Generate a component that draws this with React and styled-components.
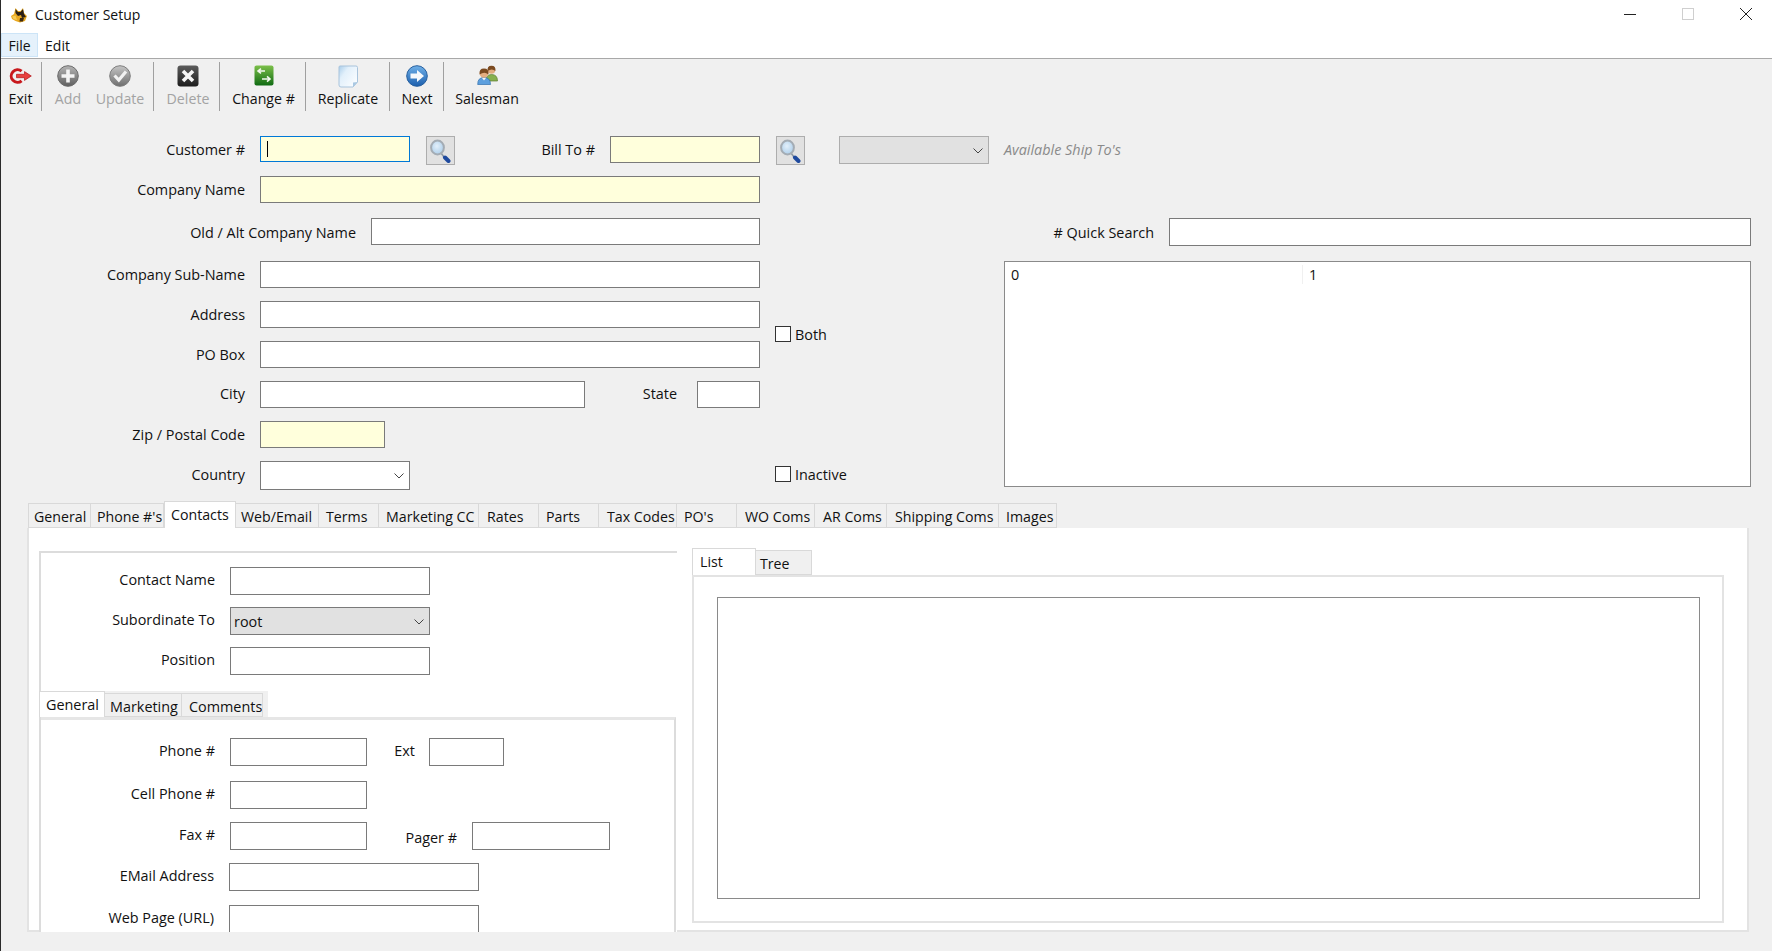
import React from "react";
import styled, { createGlobalStyle } from "styled-components";

const Global = createGlobalStyle`
  html, body { margin: 0; padding: 0; background: #f0f0f0; }
  body { font-family: "Open Sans", "Noto Sans", sans-serif; font-size: 14.4px; color: #111; }
  * { box-sizing: border-box; }
`;

const Window = styled.div`
  position: relative;
  width: 1772px;
  height: 951px;
  overflow: hidden;
  background: #f0f0f0;
  &::before {
    content: "";
    position: absolute;
    left: 0; top: 0; bottom: 0;
    width: 1px;
    background: #2a2a2a;
  }
`;

const TitleBar = styled.div`
  height: 33px;
  background: #fff;
  display: flex;
  align-items: center;
  padding-left: 10px;
  font-size: 14px;
`;
const TitleText = styled.span`
  margin-left: 7px;
  margin-top: -5px;
  flex: 1;
`;
const AppIconBox = styled.div`
  margin-top: -4px;
  display: flex;
`;
const WinControls = styled.div`
  display: flex;
  align-items: center;
  margin-top: -6px;
  padding-right: 20px;
  gap: 46px;
`;

const MenuBar = styled.div`
  height: 26px;
  background: #fff;
  display: flex;
  padding-left: 1px;
  border-bottom: 1px solid #a8a8a8;
  font-size: 14px;
`;
const MenuItem = styled.div`
  height: 24px;
  width: ${(p) => p.$w}px;
  display: flex;
  align-items: center;
  justify-content: center;
  background: ${(p) => (p.$active ? "#e5f1fb" : "transparent")};
  border: 1px solid ${(p) => (p.$active ? "#cce4f7" : "transparent")};
`;

const Toolbar = styled.div`
  height: 59px;
  display: flex;
  align-items: flex-start;
  padding-top: 3px;
  font-size: 14.2px;
`;
const Tool = styled.div`
  width: ${(p) => p.$w}px;
  margin-left: ${(p) => p.$ml || 0}px;
  margin-right: ${(p) => p.$mr || 0}px;
  height: 49px;
  display: flex;
  flex-direction: column;
  align-items: center;
  color: ${(p) => (p.$off ? "#a3a3a3" : "#111")};
`;
const ToolIcon = styled.div`
  height: 25px;
  padding-top: ${(p) => p.$pt ?? 3}px;
  display: flex;
  align-items: flex-start;
  justify-content: center;
`;
const ToolLabel = styled.div`
  margin-top: 2px;
  line-height: 19px;
  white-space: nowrap;
`;
const ToolSep = styled.div`
  width: 1px;
  height: 49px;
  background: #a0a0a0;
`;

const Form = styled.div`
  padding-top: 18px;
`;
const Row = styled.div`
  display: flex;
  align-items: flex-start;
  height: ${(p) => p.$h}px;
`;
const Label = styled.label`
  width: ${(p) => p.$w}px;
  margin-right: ${(p) => p.$gap ?? 15}px;
  height: ${(p) => p.$lh || 27}px;
  display: flex;
  align-items: center;
  justify-content: flex-end;
  white-space: nowrap;
`;
const Input = styled.input.attrs({ readOnly: true })`
  display: block;
  width: ${(p) => p.$w}px;
  height: ${(p) => p.$h || 27}px;
  margin-left: ${(p) => p.$ml || 0}px;
  padding: 0;
  outline: none;
  border: 1px solid ${(p) => (p.$focus ? "#0078d7" : "#7a7a7a")};
  background-color: ${(p) => (p.$req ? "#ffffdc" : "#fff")};
  ${(p) =>
    p.$focus
      ? `background-image: linear-gradient(#000,#000); background-repeat: no-repeat; background-size: 1px 16px; background-position: 6px center;`
      : ""}
`;
const SearchButton = styled.div`
  width: 29px;
  height: 29px;
  margin-left: ${(p) => p.$ml}px;
  background: #e1e1e1;
  border: 1px solid #adadad;
  display: flex;
  align-items: center;
  justify-content: center;
`;
const Select = styled.div`
  width: ${(p) => p.$w}px;
  height: ${(p) => p.$h || 28}px;
  margin-left: ${(p) => p.$ml || 0}px;
  border: 1px solid ${(p) => (p.$off ? "#adadad" : "#7a7a7a")};
  background: ${(p) => (p.$white ? "#fff" : "#e1e1e1")};
  display: flex;
  align-items: center;
  justify-content: space-between;
  padding: 1px 5px 0 3px;
`;
const Hint = styled.span`
  margin-left: 15px;
  height: 27px;
  display: flex;
  align-items: center;
  font-style: italic;
  color: #8a8a8a;
  white-space: nowrap;
`;

const Columns = styled.div`
  display: flex;
  height: 325px;
`;
const FieldsCol = styled.div`
  width: 760px;
  flex: none;
`;
const ChecksCol = styled.div`
  width: 244px;
  flex: none;
  padding: 150px 0 0 15px;
  display: flex;
  flex-direction: column;
  gap: 124px;
`;
const CheckRow = styled.div`
  display: flex;
  align-items: center;
  gap: 4px;
  height: 16px;
`;
const CheckBox = styled.span`
  width: 16px;
  height: 16px;
  background: #fff;
  border: 1px solid #333;
  flex: none;
`;
const SearchCol = styled.div`
  width: 747px;
  flex: none;
  padding-top: 42px;
`;
const QuickRow = styled.div`
  display: flex;
  height: 43px;
`;
const ResultList = styled.div`
  height: 226px;
  background: #fff;
  border: 1px solid #8a8a8a;
  display: flex;
  padding-top: 3px;
`;
const ResultCol = styled.div`
  height: 19px;
  width: ${(p) => p.$w}px;
  padding-left: 6px;
  border-right: 1px solid ${(p) => (p.$edge ? "#f0f0f0" : "transparent")};
`;

const TabStrip = styled.div`
  display: flex;
  align-items: flex-end;
  height: ${(p) => p.$h}px;
  margin-left: ${(p) => p.$ml || 0}px;
  font-size: 14.2px;
`;
const Tab = styled.div`
  width: ${(p) => p.$w}px;
  height: ${(p) => (p.$active ? p.$h + 2 : p.$h)}px;
  flex: none;
  background: ${(p) => (p.$active ? "#fff" : "#f0f0f0")};
  border: 1px solid #d9d9d9;
  border-left-width: ${(p) => (p.$first || p.$active ? 1 : 0)}px;
  border-bottom: ${(p) => (p.$active ? "none" : "1px solid #d9d9d9")};
  padding: 3px 0 0 ${(p) => p.$pl ?? 5}px;
  line-height: 19px;
  white-space: nowrap;
  overflow: hidden;
`;

const MainTabs = styled.div`
  margin-left: 27px;
  width: 1722px;
`;
const MainPanel = styled.div`
  height: 404px;
  overflow: hidden;
  display: flex;
  align-items: flex-start;
  border-left: 2px solid #e3e3e3;
  border-right: 2px solid #e3e3e3;
  background: linear-gradient(#e3e3e3, #e3e3e3) bottom / 100% 2px no-repeat, #fff;
`;
const ContactPanel = styled.div`
  flex: none;
  width: 638px;
  height: 460px;
  margin: 23px 0 0 10px;
  background: #fff;
  border-left: 2px solid #dcdcdc;
  border-top: 2px solid #dcdcdc;
  padding-top: 14px;
`;
const SubRow = styled.div`
  display: flex;
  align-items: flex-start;
  height: ${(p) => p.$h}px;
`;
const SubLabel = styled(Label)`
  height: ${(p) => p.$lh || 25}px;
`;
const InnerStrip = styled.div`
  display: flex;
  align-items: flex-end;
  height: 26px;
  width: 229px;
  margin-left: -2px;
  background: #f0f0f0;
`;
const InnerPanel = styled.div`
  width: 635px;
  height: 300px;
  border-top: 3px solid #e6e6e6;
  border-right: 2px solid #dcdcdc;
  padding-top: 18px;
`;
const RightArea = styled.div`
  flex: none;
  width: 1032px;
  margin: 20px 0 0 15px;
`;
const RightPanel = styled.div`
  height: 348px;
  border: 2px solid #e3e3e3;
  background: #fff;
  padding: 20px 22px 0 23px;
`;
const TreeBox = styled.div`
  height: 302px;
  border: 1px solid #8a8a8a;
  background: #fff;
`;

const Chevron = () => (
  <svg width="10" height="6" viewBox="0 0 10 6" fill="none" stroke="#444" strokeWidth="1">
    <path d="M0.5 0.5 L5 5 L9.5 0.5" />
  </svg>
);

const Magnifier = () => (
  <svg width="23" height="25" viewBox="0 0 23 25">
    <defs>
      <radialGradient id="lens" cx="0.45" cy="0.4" r="0.65">
        <stop offset="0" stopColor="#e3f0fb" />
        <stop offset="1" stopColor="#a9cbe8" />
      </radialGradient>
    </defs>
    <path d="M12 15 L15 19" stroke="#8b98a5" strokeWidth="1.6" />
    <path d="M16 19.5 L19.5 23" stroke="#1f4a9e" strokeWidth="4" strokeLinecap="round" />
    <ellipse cx="8.5" cy="9.5" rx="6.4" ry="7" fill="url(#lens)" stroke="#a4acb4" strokeWidth="2" />
  </svg>
);

const AppIcon = () => (
  <svg width="18" height="16" viewBox="0 0 18 16">
    <path d="M1 9 L4 7 L5.5 1 L8 4 L10.5 4 L13 1 L14 6 L17 9 L15 14 L10 15.5 L5.5 14 L2 12 Z" fill="#e9a81f" />
    <path d="M5.5 2 L8 5 L10.5 5 L13 2 L14 7 L16 10 L12 11 L11 8 L8 9 L5.5 6 Z" fill="#2a2018" />
    <path d="M2 9.5 L5.5 8.5 L7 13 L3.5 12 Z" fill="#f7cc55" />
    <path d="M10 11 L14 11 L13 14.5 L9.5 14.5 Z" fill="#3d2a12" />
  </svg>
);

const ExitIcon = () => (
  <svg width="23" height="16" viewBox="0 0 23 16">
    <path d="M12.6 3.2 A6.3 6.3 0 1 0 12.6 12.8" fill="none" stroke="#c8181c" strokeWidth="3" />
    <path d="M7.5 6.3 H15.5 V3.6 L22.3 8 L15.5 12.4 V9.7 H7.5 Z" fill="#e8403f" stroke="#b3161a" strokeWidth="0.7" />
  </svg>
);

const Disc = ({ id, from, to, ring, children }) => (
  <svg width="22" height="22" viewBox="0 0 22 22">
    <defs>
      <linearGradient id={id} x1="0" y1="0" x2="0" y2="1">
        <stop offset="0" stopColor={from} />
        <stop offset="1" stopColor={to} />
      </linearGradient>
    </defs>
    <circle cx="11" cy="11" r="10.3" fill={`url(#${id})`} stroke={ring} strokeWidth="1" />
    {children}
  </svg>
);

const AddIcon = () => (
  <Disc id="addg" from="#b5b5b5" to="#5f5f5f" ring="#6b6b6b">
    <path d="M11 4.5 V17.5 M4.5 11 H17.5" stroke="#f4f4f4" strokeWidth="3.6" />
  </Disc>
);
const UpdateIcon = () => (
  <Disc id="updg" from="#c6c6c6" to="#6e6e6e" ring="#7d7d7d">
    <path d="M5.5 10.5 L9.8 15 L17 6.5" fill="none" stroke="#f2f2f2" strokeWidth="3.2" />
  </Disc>
);
const NextIcon = () => (
  <Disc id="nxtg" from="#6fb0e8" to="#1c5fae" ring="#27609f">
    <path d="M4.5 8.6 H11 V5 L18 11 L11 17 V13.4 H4.5 Z" fill="#f6f9fc" />
  </Disc>
);
const DeleteIcon = () => (
  <svg width="22" height="22" viewBox="0 0 22 22">
    <defs>
      <linearGradient id="delg" x1="0" y1="0" x2="0" y2="1">
        <stop offset="0" stopColor="#5c5c5c" />
        <stop offset="1" stopColor="#1d1d1d" />
      </linearGradient>
    </defs>
    <rect x="0.5" y="0.5" width="21" height="21" rx="3" fill="url(#delg)" />
    <path d="M6 6 L16 16 M16 6 L6 16" stroke="#f6f6f6" strokeWidth="3.6" />
  </svg>
);
const ChangeIcon = () => (
  <svg width="20" height="21" viewBox="0 0 20 21">
    <defs>
      <linearGradient id="chg" x1="0" y1="0" x2="0" y2="1">
        <stop offset="0" stopColor="#7cc04a" />
        <stop offset="1" stopColor="#0f6a12" />
      </linearGradient>
    </defs>
    <rect x="0.5" y="0.5" width="19" height="20" rx="2" fill="url(#chg)" />
    <path d="M11 6 H4.5 M7 3.6 L4 6 L7 8.4" fill="none" stroke="#f2f7ee" strokeWidth="1.6" />
    <path d="M8 14 H15.5 M13 11.4 L16 14 L13 16.6" fill="none" stroke="#f2f7ee" strokeWidth="1.6" />
  </svg>
);
const ReplicateIcon = () => (
  <svg width="20" height="23" viewBox="0 0 20 23">
    <defs>
      <linearGradient id="repg" x1="0" y1="0" x2="1" y2="0.8">
        <stop offset="0" stopColor="#a9cdea" />
        <stop offset="0.35" stopColor="#e2f0fb" />
        <stop offset="1" stopColor="#fbfdff" />
      </linearGradient>
    </defs>
    <path d="M2 1 H18 Q19.5 1 19.5 2.5 V17 L15 22 H3 Q1 22 1 20 V2 Q1 1 2 1 Z" fill="url(#repg)" stroke="#a9c4dc" strokeWidth="1" />
    <path d="M19.5 17 L15 17.5 L15 22 Z" fill="#a9c8e2" />
  </svg>
);
const SalesmanIcon = () => (
  <svg width="21" height="20" viewBox="0 0 21 20">
    <path d="M9 16 Q9 9.5 14.5 9.5 Q20.5 9.5 20.5 16 Z" fill="#87b04e" stroke="#5c7d2e" strokeWidth="0.7" />
    <circle cx="14.5" cy="5" r="3.8" fill="#e3ad80" />
    <path d="M10.6 6 Q10 0.8 14.5 0.8 Q19 0.8 18.4 6 Q15 3 10.6 6 Z" fill="#7b4a20" />
    <path d="M0.7 19.5 Q0.5 12.5 7 12.5 Q13.5 12.5 13.5 19.5 Z" fill="#5c9fde" stroke="#3070ae" strokeWidth="0.7" />
    <path d="M5 13 L7 15.5 L9 13 Z" fill="#f4f4f4" />
    <circle cx="7" cy="8.5" r="4.3" fill="#e3ad80" />
    <path d="M2.6 9.5 Q1.8 3.6 7 3.6 Q12.2 3.6 11.4 9.5 Q7.5 6.2 2.6 9.5 Z" fill="#7b4a20" />
  </svg>
);

const topTabs = [
  ["General", 63, 5], ["Phone #'s", 73, 6], ["Contacts", 72, 6, true], ["Web/Email", 83, 5], ["Terms", 60, 7],
  ["Marketing CC", 100, 7], ["Rates", 60, 8], ["Parts", 60, 7], ["Tax Codes", 78, 8], ["PO's", 60, 7],
  ["WO Coms", 78, 8], ["AR Coms", 72, 8], ["Shipping Coms", 112, 8], ["Images", 58, 7],
];

export default function App() {
  return (
    <Window>
      <Global />
      <TitleBar>
        <AppIconBox><AppIcon /></AppIconBox>
        <TitleText>Customer Setup</TitleText>
        <WinControls>
          <svg width="12" height="12" viewBox="0 0 12 12"><path d="M0 6.5 H12" stroke="#222" strokeWidth="1" /></svg>
          <svg width="12" height="12" viewBox="0 0 12 12"><rect x="0.5" y="0.5" width="11" height="11" fill="none" stroke="#cfcfcf" /></svg>
          <svg width="12" height="12" viewBox="0 0 12 12"><path d="M0 0 L12 12 M12 0 L0 12" stroke="#222" strokeWidth="1" /></svg>
        </WinControls>
      </TitleBar>
      <MenuBar>
        <MenuItem $w={37} $active>File</MenuItem>
        <MenuItem $w={39}>Edit</MenuItem>
      </MenuBar>
      <Toolbar>
        <Tool $w={41}><ToolIcon $pt={6}><ExitIcon /></ToolIcon><ToolLabel>Exit</ToolLabel></Tool>
        <ToolSep />
        <Tool $w={52} $off><ToolIcon><AddIcon /></ToolIcon><ToolLabel>Add</ToolLabel></Tool>
        <Tool $w={52} $mr={7} $off><ToolIcon><UpdateIcon /></ToolIcon><ToolLabel>Update</ToolLabel></Tool>
        <ToolSep />
        <Tool $w={62} $ml={3} $off><ToolIcon><DeleteIcon /></ToolIcon><ToolLabel>Delete</ToolLabel></Tool>
        <ToolSep />
        <Tool $w={83} $ml={2}><ToolIcon><ChangeIcon /></ToolIcon><ToolLabel>Change #</ToolLabel></Tool>
        <ToolSep />
        <Tool $w={82} $ml={1}><ToolIcon><ReplicateIcon /></ToolIcon><ToolLabel>Replicate</ToolLabel></Tool>
        <ToolSep />
        <Tool $w={52} $ml={1}><ToolIcon><NextIcon /></ToolIcon><ToolLabel>Next</ToolLabel></Tool>
        <ToolSep />
        <Tool $w={86}><ToolIcon><SalesmanIcon /></ToolIcon><ToolLabel>Salesman</ToolLabel></Tool>
      </Toolbar>

      <Form>
        <Row $h={40}>
          <Label $w={245}>Customer #</Label>
          <Input $w={150} $h={26} $req $focus />
          <SearchButton $ml={16}><Magnifier /></SearchButton>
          <Label $w={140} $gap={15}>Bill To #</Label>
          <Input $w={150} $req />
          <SearchButton $ml={16}><Magnifier /></SearchButton>
          <Select $w={150} $ml={34} $off><span /><Chevron /></Select>
          <Hint>Available Ship To's</Hint>
        </Row>
        <Columns>
          <FieldsCol>
            <Row $h={42}><Label $w={245}>Company Name</Label><Input $w={500} $req /></Row>
            <Row $h={43}><Label $w={356} $lh={28}>Old / Alt Company Name</Label><Input $w={389} /></Row>
            <Row $h={40}><Label $w={245}>Company Sub-Name</Label><Input $w={500} /></Row>
            <Row $h={40}><Label $w={245}>Address</Label><Input $w={500} /></Row>
            <Row $h={40}><Label $w={245}>PO Box</Label><Input $w={500} /></Row>
            <Row $h={40}>
              <Label $w={245} $lh={25}>City</Label>
              <Input $w={325} />
              <Label $w={92} $gap={20} $lh={25}>State</Label>
              <Input $w={63} />
            </Row>
            <Row $h={40}><Label $w={245}>Zip / Postal Code</Label><Input $w={125} $req /></Row>
            <Row $h={40}>
              <Label $w={245}>Country</Label>
              <Select $w={150} $h={29} $white><span /><Chevron /></Select>
            </Row>
          </FieldsCol>
          <ChecksCol>
            <CheckRow><CheckBox />Both</CheckRow>
            <CheckRow><CheckBox />Inactive</CheckRow>
          </ChecksCol>
          <SearchCol>
            <QuickRow>
              <Label $w={150} $lh={28}># Quick Search</Label>
              <Input $w={582} $h={28} />
            </QuickRow>
            <ResultList>
              <ResultCol $w={298} $edge>0</ResultCol>
              <ResultCol $w={200}>1</ResultCol>
            </ResultList>
          </SearchCol>
        </Columns>

        <MainTabs>
          <TabStrip $h={27} $ml={1}>
            {topTabs.map(([t, w, pl, a], i) => (
              <Tab key={t} $w={w} $h={25} $pl={pl} $active={a} $first={i === 0}>{t}</Tab>
            ))}
          </TabStrip>
          <MainPanel>
            <ContactPanel>
              <SubRow $h={40}><SubLabel $w={174}>Contact Name</SubLabel><Input $w={200} $h={28} /></SubRow>
              <SubRow $h={40}>
                <SubLabel $w={174}>Subordinate To</SubLabel>
                <Select $w={200}>root<Chevron /></Select>
              </SubRow>
              <SubRow $h={44}><SubLabel $w={174}>Position</SubLabel><Input $w={200} $h={28} /></SubRow>
              <InnerStrip>
                <Tab $w={66} $h={24} $pl={6} $active $first>General</Tab>
                <Tab $w={77} $h={24} $pl={5}>Marketing</Tab>
                <Tab $w={81} $h={24} $pl={7}>Comments</Tab>
              </InnerStrip>
              <InnerPanel>
                <SubRow $h={43}>
                  <SubLabel $w={174}>Phone #</SubLabel><Input $w={137} $h={28} />
                  <SubLabel $w={48} $gap={14}>Ext</SubLabel><Input $w={75} $h={28} />
                </SubRow>
                <SubRow $h={41}><SubLabel $w={174}>Cell Phone #</SubLabel><Input $w={137} $h={28} /></SubRow>
                <SubRow $h={41}>
                  <SubLabel $w={174}>Fax #</SubLabel><Input $w={137} $h={28} />
                  <SubLabel $w={90} $lh={31}>Pager #</SubLabel><Input $w={138} $h={28} />
                </SubRow>
                <SubRow $h={42}><SubLabel $w={173}>EMail Address</SubLabel><Input $w={250} $h={28} /></SubRow>
                <SubRow $h={42}><SubLabel $w={173}>Web Page (URL)</SubLabel><Input $w={250} $h={28} /></SubRow>
              </InnerPanel>
            </ContactPanel>
            <RightArea>
              <TabStrip $h={27}>
                <Tab $w={64} $h={25} $pl={7} $active $first>List</Tab>
                <Tab $w={56} $h={25} $pl={4}>Tree</Tab>
              </TabStrip>
              <RightPanel><TreeBox /></RightPanel>
            </RightArea>
          </MainPanel>
        </MainTabs>
      </Form>
    </Window>
  );
}
